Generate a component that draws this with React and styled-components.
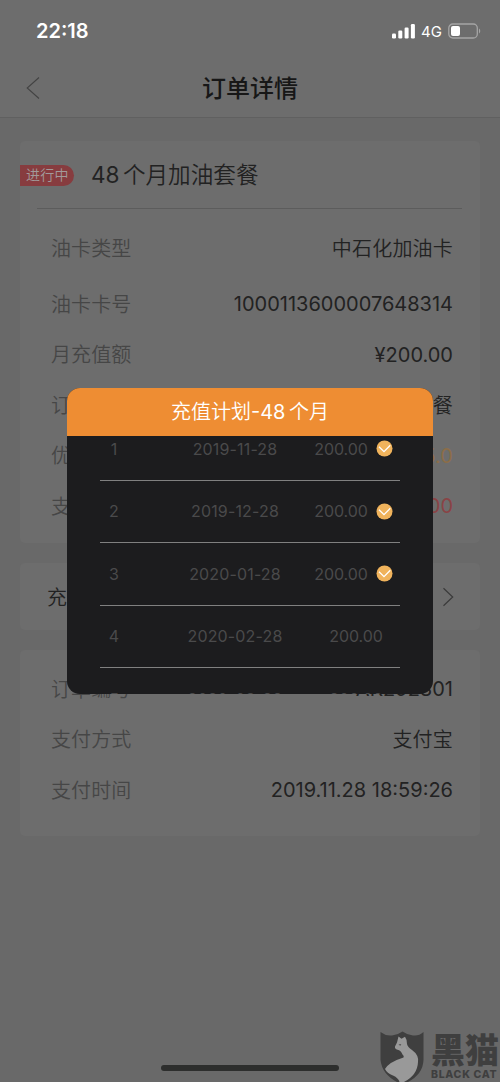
import styled, { createGlobalStyle, css } from "styled-components";

const theme = {
  colors: {
    page: "#696969",
    card: "#6d6d6d",
    border: "#5c5c5c",
    text: "#222222",
    label: "#464646",
    orange: "#ee8d33",
    check: "#f0b35c",
    red: "#8a4345",
    amber: "#8c6d48",
    modal: "#1c1c1e",
    modalText: "#4a4a4b",
  },
  font: `Inter, "Noto Sans CJK SC", sans-serif`,
  lightFont: `Inter, "Noto Sans CJK SC DemiLight", "Noto Sans CJK SC", sans-serif`,
};

const GlobalStyle = createGlobalStyle`
  * {
    box-sizing: border-box;
  }
  body {
    margin: 0;
    background-color: ${theme.colors.page};
    font-family: ${theme.font};
    color: ${theme.colors.text};
  }
`;

const Screen = styled.div`
  position: relative;
  width: 500px;
  height: 1082px;
  overflow: hidden;
  background-color: ${theme.colors.page};
`;

const TopArea = styled.header`
  height: 118px;
  background-color: ${theme.colors.card};
  border-bottom: 1px solid #606060;
`;

const StatusBar = styled.div`
  display: flex;
  align-items: center;
  justify-content: space-between;
  height: 60px;
  padding: 2px 19px 0 36px;
  color: #ffffff;
`;

const Clock = styled.span`
  font-size: 20px;
  font-weight: 600;
`;

const StatusIcons = styled.div`
  display: flex;
  align-items: center;
  gap: 6px;
  font-size: 15px;
`;

const NavBar = styled.div`
  display: grid;
  grid-template-columns: 50px 1fr 50px;
  align-items: center;
  height: 56px;
  & > svg {
    margin-left: 26px;
  }
`;

const Title = styled.h1`
  margin: 0;
  text-align: center;
  font-size: 24px;
  font-weight: 500;
  line-height: 36px;
  padding-top: 1px;
  color: #171717;
`;

const Content = styled.main`
  display: flex;
  flex-direction: column;
  gap: 20px;
  padding: 23px 20px 0;
  font-family: ${theme.lightFont};
`;

const Card = styled.section`
  background-color: ${theme.colors.card};
  border-radius: 5px;
  height: ${({ $height }) => $height}px;
  padding-top: ${({ $top = 0 }) => $top}px;
`;

const PlanHeader = styled.div`
  display: flex;
  align-items: center;
  gap: 17px;
  height: 68px;
`;

const Badge = styled.span`
  width: 54px;
  height: 21px;
  padding-left: 6px;
  border-radius: 0 11px 11px 0;
  background-color: #873c3f;
  color: #a29a9a;
  font-size: 14px;
  font-weight: 300;
  line-height: 20px;
  letter-spacing: 0.3px;
`;

const PlanName = styled.h2`
  margin: 0;
  font-size: 22.6px;
  font-weight: 300;
  line-height: 34px;
  word-spacing: -3px;
`;

const Digits = styled.span`
  font-weight: 400;
`;

const Divider = styled.hr`
  width: 425px;
  height: 1px;
  margin: -1px 0 9px 17px;
  border: none;
  background-color: ${theme.colors.border};
`;

const Row = styled.div`
  display: flex;
  align-items: center;
  justify-content: space-between;
  height: ${({ $height = 50.5 }) => $height}px;
  padding: 0 27px 0 31px;
  font-size: 20px;
  line-height: 30px;
`;

const Label = styled.span`
  padding-top: 1px;
  color: ${theme.colors.label};
  font-weight: 300;
  letter-spacing: 0.1px;
`;

const Value = styled.span`
  padding-top: ${({ $chinese }) => ($chinese ? 1 : 0)}px;
  color: ${({ $color = theme.colors.text }) => $color};
  font-weight: ${({ $chinese }) => ($chinese ? 300 : 400)};
  letter-spacing: ${({ $chinese }) => ($chinese ? 0.2 : 0)}px;
`;

const LinkRow = styled.div`
  display: flex;
  align-items: center;
  justify-content: space-between;
  height: 67px;
  padding: 0 26px 0 27px;
  font-size: 20px;
  font-weight: 300;
`;

const Overlay = styled.div`
  position: absolute;
  inset: 0;
  display: flex;
  align-items: center;
  justify-content: center;
`;

const Modal = styled.div`
  width: 366px;
  height: 306px;
  border-radius: 13px;
  overflow: hidden;
  background-color: ${theme.colors.modal};
`;

const ModalTitle = styled.div`
  height: 48px;
  padding-top: 1px;
  background-color: ${theme.colors.orange};
  color: #ffffff;
  font-family: ${theme.lightFont};
  font-size: 20px;
  font-weight: 300;
  line-height: 47px;
  text-align: center;
  word-spacing: -2px;
`;

const PlanList = styled.div`
  height: 258px;
  padding: 0 33px;
  overflow: hidden;
`;

const PlanRow = styled.div`
  display: grid;
  grid-template-columns: 28px 214px 1fr;
  align-items: center;
  height: 62.5px;
  border-bottom: 1px solid #808080;
  color: ${theme.colors.modalText};
  font-size: 16px;
  text-align: center;
  ${({ $first }) =>
    $first &&
    css`
      margin-top: -18px;
    `}
`;

const PlanDate = styled.span`
  letter-spacing: 0.15px;
`;

const Amount = styled.span`
  display: flex;
  align-items: center;
  justify-content: center;
  gap: 8px;
  margin-left: ${({ $done }) => ($done ? -35 : -30)}px;
  letter-spacing: -0.1px;
`;

const HomeBar = styled.div`
  position: absolute;
  left: 161px;
  bottom: 11px;
  width: 178px;
  height: 6px;
  border-radius: 3px;
  background-color: #2d2e2d;
`;

const Watermark = styled.div`
  position: absolute;
  right: 0;
  bottom: 0;
  display: flex;
  gap: 6px;
  width: 120px;
  height: 51px;
  color: #3f3f3f;
`;

const WatermarkText = styled.div`
  display: flex;
  flex-direction: column;
  padding-top: 2px;
  & > strong {
    font-size: 34px;
    font-weight: 900;
    line-height: 35px;
  }
  & > span {
    font-size: 10.5px;
    font-weight: 800;
    line-height: 13px;
    letter-spacing: 0.7px;
    white-space: nowrap;
  }
`;

const SignalIcon = () => (
  <svg fill="#fff" height="15" viewBox="0 0 23 15" width="23">
    <rect height="5" rx="1.2" width="4" x="0" y="9.5" />
    <rect height="8" rx="1.2" width="4" x="6.3" y="6.5" />
    <rect height="11" rx="1.2" width="4" x="12.6" y="3.5" />
    <rect height="14.5" rx="1.2" width="4" x="18.9" y="0" />
  </svg>
);

const BatteryIcon = () => (
  <svg fill="none" height="16" viewBox="0 0 33 16" width="33">
    <rect
      height="14"
      rx="4"
      stroke="#a5a5a5"
      strokeWidth="1.3"
      width="28.5"
      x="0.8"
      y="1"
    />
    <rect fill="#fff" height="10" rx="2" width="9" x="3" y="3" />
    <path d="M31 5.5c1.6.7 1.6 4.3 0 5z" fill="#a5a5a5" />
  </svg>
);

const BackIcon = () => (
  <svg fill="none" height="22" stroke="#434343" viewBox="0 0 14 22" width="14">
    <path d="M13 .5 1.2 11 13 21.5" strokeWidth="1.1" />
  </svg>
);

const ForwardIcon = () => (
  <svg fill="none" height="20" stroke="#3a3a3a" viewBox="0 0 12 20" width="12">
    <path d="M1.5 1.2 10.7 10 1.5 18.8" strokeWidth="1.2" />
  </svg>
);

const CheckIcon = () => (
  <svg fill="none" height="17" viewBox="0 0 17 17" width="17">
    <circle cx="8.5" cy="8.5" fill={theme.colors.check} r="8" />
    <path d="M3 6.8 8 11.7 14.3 5.3" stroke="#fff" strokeWidth="1.3" />
  </svg>
);

const CatShield = () => (
  <svg height="51" viewBox="0 0 45 51" width="45">
    <path
      d="M.5 1Q7 6 14 4Q19 3 22.5.5Q26 3 31 4Q38 6 43.5 1V29Q43 43 28 51H17Q2 43 .5 29Z"
      fill="#3f3f3f"
    />
    <path
      d="M18.5 5.5 21.5 7.7 25 5.8Q27 8.5 27 13Q27.5 16 32 19Q39 24 38 31Q37.5 44 24 51H19.5Q18.5 47 13 44.5Q7 42 5 38Q9 31 23.5 26.5Q24.5 25 22.5 23.5Q21 19.5 17.5 18.7Q14.5 18 15 15.500L17 11.5Z"
      fill="#999999"
    />
    <path d="M18.5 13.5 21.3 13.2 20.2 14.8Z" fill="#3f3f3f" />
  </svg>
);

const orderRows = [
  { label: "油卡类型", value: "中石化加油卡", height: 61, chinese: true },
  { label: "油卡卡号", value: "1000113600007648314" },
  { label: "月充值额", value: "¥200.00" },
  { label: "订购套餐", value: "48 个月加油套餐", chinese: true },
  { label: "优惠金额", value: "¥1435.0", color: theme.colors.amber },
  { label: "支付金额", value: "¥8165.00", color: theme.colors.red },
];

const paymentRows = [
  { label: "订单编号", value: "AK292801" },
  { label: "支付方式", value: "支付宝", chinese: true },
  { label: "支付时间", value: "2019.11.28 18:59:26" },
];

const planRows = [
  { date: "2019-11-28", done: true },
  { date: "2019-12-28", done: true },
  { date: "2020-01-28", done: true },
  { date: "2020-02-28", done: false },
  { date: "2020-03-28", done: false },
];

export default function App() {
  return (
    <Screen>
      <GlobalStyle />
      <TopArea>
        <StatusBar>
          <Clock>22:18</Clock>
          <StatusIcons>
            <SignalIcon />
            <span>4G</span>
            <BatteryIcon />
          </StatusIcons>
        </StatusBar>
        <NavBar>
          <BackIcon />
          <Title>订单详情</Title>
        </NavBar>
      </TopArea>

      <Content>
        <Card $height={402}>
          <PlanHeader>
            <Badge>进行中</Badge>
            <PlanName>
              <Digits>48</Digits> 个月加油套餐
            </PlanName>
          </PlanHeader>
          <Divider />
          {orderRows.map(({ label, value, color, height, chinese }) => (
            <Row key={label} $height={height}>
              <Label>{label}</Label>
              <Value $chinese={chinese} $color={color}>
                {value}
              </Value>
            </Row>
          ))}
        </Card>

        <Card $height={67}>
          <LinkRow>
            <span>充值计划</span>
            <ForwardIcon />
          </LinkRow>
        </Card>

        <Card $height={186} $top={14}>
          {paymentRows.map(({ label, value, chinese }) => (
            <Row key={label}>
              <Label>{label}</Label>
              <Value $chinese={chinese}>{value}</Value>
            </Row>
          ))}
        </Card>
      </Content>

      <HomeBar />

      <Overlay>
        <Modal>
          <ModalTitle>
            充值计划<Digits>-48</Digits> 个月
          </ModalTitle>
          <PlanList>
            {planRows.map(({ date, done }, index) => (
              <PlanRow key={date} $first={index === 0}>
                <span>{index + 1}</span>
                <PlanDate>{date}</PlanDate>
                <Amount $done={done}>
                  200.00
                  {done && <CheckIcon />}
                </Amount>
              </PlanRow>
            ))}
          </PlanList>
        </Modal>
      </Overlay>

      <Watermark>
        <CatShield />
        <WatermarkText>
          <strong>黑猫</strong>
          <span>BLACK CAT</span>
        </WatermarkText>
      </Watermark>
    </Screen>
  );
}
